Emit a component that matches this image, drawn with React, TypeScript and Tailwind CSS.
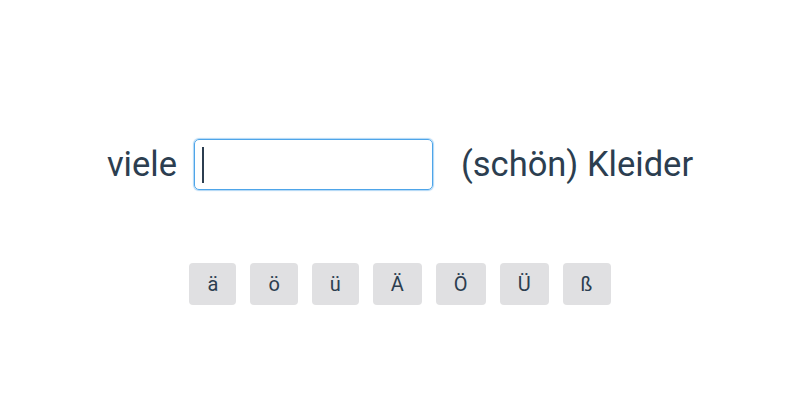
import { useState } from "react"

const specialChars = ["ä", "ö", "ü", "Ä", "Ö", "Ü", "ß"]

const App = () => {
    const [value, setValue] = useState("")

    return (
        <div className="h-[400px] w-full bg-white font-['Roboto',sans-serif] text-[#2c3e50]">
            <div className="flex flex-col items-center pt-[139px]">
                <div className="flex items-center">
                    <span className="text-[34.5px] leading-none">viele</span>
                    <div className="relative ml-[17px]">
                        <input
                            type="text"
                            value={value}
                            onChange={(e) => setValue(e.target.value)}
                            className="h-[51px] w-[239px] rounded-[5px] border border-[#4ea5e9] px-2 text-[32px] outline-none shadow-[0_0_1px_1px_rgba(78,165,233,0.45)] caret-transparent"
                        />
                        {/* fake caret, the real one blinks */}
                        {value === "" && (
                            <span className="absolute left-[8px] top-[8px] h-[36px] w-[2px] bg-[#2c3e50]" />
                        )}
                    </div>
                    <span className="ml-[28px] text-[34.5px] leading-none">(schön) Kleider</span>
                </div>
                <div className="mt-[73px] flex gap-[14px]">
                    {specialChars.map((ch) => (
                        <button
                            key={ch}
                            type="button"
                            onClick={() => setValue(value + ch)}
                            className="rounded-[4px] bg-[#e0e0e2] px-[18px] py-[7px] text-xl leading-7 text-[#2c3e50]"
                        >
                            {ch}
                        </button>
                    ))}
                </div>
            </div>
        </div>
    )
}

export default App
